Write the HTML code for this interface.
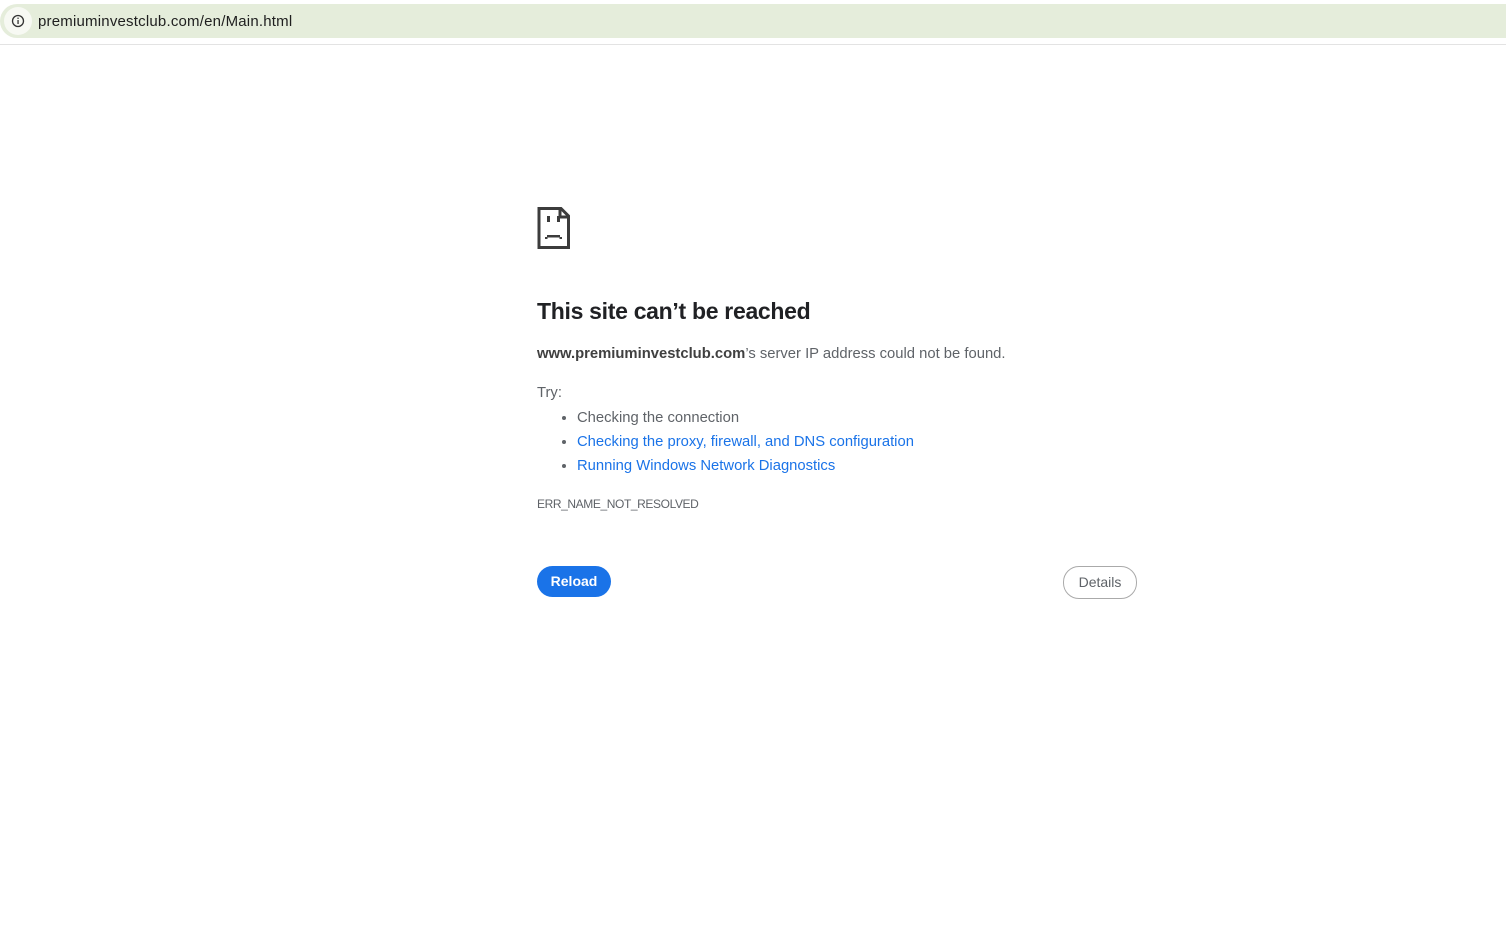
<!DOCTYPE html>
<html><head><meta charset="utf-8"><style>
html,body{margin:0;padding:0;background:#fff;width:1506px;height:945px;overflow:hidden;font-family:"Liberation Sans",sans-serif;}
.bar{position:absolute;left:0;top:4px;width:1506px;height:34px;background:#e5eddb;border-radius:17px 0 0 17px;}
.ic{position:absolute;left:4px;top:3px;width:28px;height:28px;border-radius:50%;background:#f7f9f3;}
.url{position:absolute;left:38px;top:1px;line-height:34px;font-size:15px;color:#1f1f1f;letter-spacing:0.2px;}
.line{position:absolute;left:0;top:44px;width:1506px;height:1px;background:#e3e3e3;}
.t{position:absolute;left:537px;color:#5f6368;font-size:14.8px;}
h1{position:absolute;left:537px;top:298px;margin:0;font-size:23px;font-weight:bold;color:#202124;letter-spacing:-0.3px;}
a{color:#1a73e8;text-decoration:none;}
ul{position:absolute;left:537px;top:406px;margin:0;padding-left:40px;font-size:14.8px;color:#5f6368;}
li{line-height:24px;}
.btn{position:absolute;border-radius:16px;font-size:14px;text-align:center;}
</style></head><body>
<div class="bar"><div class="ic">
<svg width="28" height="28" viewBox="0 0 28 28"><circle cx="14" cy="14" r="5.5" fill="none" stroke="#333" stroke-width="1.3"/><rect x="13.4" y="13" width="1.3" height="4" fill="#333"/><rect x="13.4" y="10.6" width="1.3" height="1.3" fill="#333"/></svg>
</div><div class="url">premiuminvestclub.com/en/Main.html</div></div>
<div class="line"></div>
<svg style="position:absolute;left:537px;top:207px" width="34" height="42" viewBox="0 0 34 42">
<path d="M2 40.5V1.5H24L31.5 9V40.5Z" fill="none" stroke="#3c3c3c" stroke-width="3" stroke-linejoin="miter"/>
<path d="M23 1.5V10H31.5" fill="none" stroke="#3c3c3c" stroke-width="3"/>
<rect x="10" y="9" width="3" height="6" fill="#3c3c3c"/><rect x="20" y="9" width="3" height="6" fill="#3c3c3c"/>
<rect x="10" y="28" width="13" height="2.5" fill="#3c3c3c"/><rect x="8" y="30" width="2.5" height="2" fill="#3c3c3c"/><rect x="22.5" y="30" width="2.5" height="2" fill="#3c3c3c"/>
</svg>
<h1>This site can’t be reached</h1>
<div class="t" style="top:346px"><b style="color:#404040">www.premiuminvestclub.com</b>’s server IP address could not be found.</div>
<div class="t" style="top:385px">Try:</div>
<ul><li>Checking the connection</li><li><a>Checking the proxy, firewall, and DNS configuration</a></li><li><a>Running Windows Network Diagnostics</a></li></ul>
<div class="t" style="top:497px;font-size:12px;letter-spacing:-0.4px">ERR_NAME_NOT_RESOLVED</div>
<div class="btn" style="left:537px;top:566px;width:74px;height:31px;line-height:31px;background:#1a73e8;color:#fff;font-weight:bold;">Reload</div>
<div class="btn" style="left:1063px;top:566px;width:72px;height:31px;line-height:31px;border:1px solid #aaa;color:#5f6368;">Details</div>
</body></html>
